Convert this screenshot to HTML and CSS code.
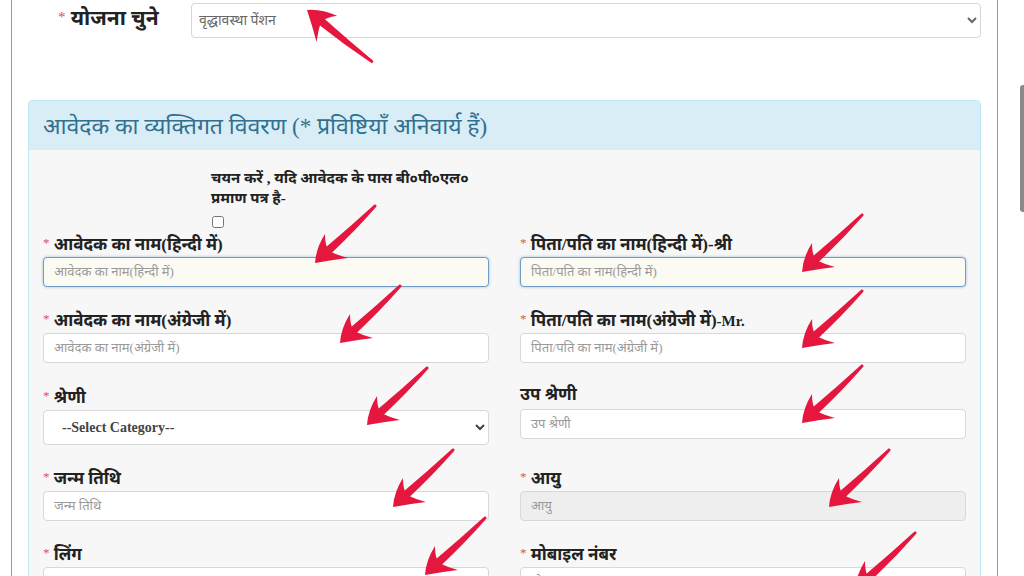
FILE: index.html
```html
<!DOCTYPE html>
<html lang="hi">
<head>
<meta charset="utf-8">
<title>आवेदन पत्र</title>
<link rel="stylesheet" href="styles.css">
</head>
<body>
<div class="screen">
  <div class="page">
    <div class="scheme-row">
      <label class="scheme-label"><span class="req">*</span> योजना चुने</label>
      <select class="scheme-select"><option>वृद्धावस्था पेंशन</option></select>
    </div>
    <div class="panel">
      <div class="panel-heading">आवेदक का व्यक्तिगत विवरण (* प्रविष्टियाँ अनिवार्य हैं)</div>
      <div class="panel-body">
        <div class="bpl">
          <p>चयन करें , यदि आवेदक के पास बी०पी०एल० प्रमाण पत्र है-</p>
          <input type="checkbox" class="bpl-check">
        </div>
        <div class="form-grid">
          <div class="field">
            <label><span class="req">*</span> आवेदक का नाम(हिन्दी में)</label>
            <input class="ctl focus" type="text" placeholder="आवेदक का नाम(हिन्दी में)">
          </div>
          <div class="field">
            <label><span class="req">*</span> पिता/पति का नाम(हिन्दी में)-श्री</label>
            <input class="ctl focus" type="text" placeholder="पिता/पति का नाम(हिन्दी में)">
          </div>
          <div class="field">
            <label><span class="req">*</span> आवेदक का नाम(अंग्रेजी में)</label>
            <input class="ctl" type="text" placeholder="आवेदक का नाम(अंग्रेजी में)">
          </div>
          <div class="field">
            <label><span class="req">*</span> पिता/पति का नाम(अंग्रेजी में)<span class="en">-Mr.</span></label>
            <input class="ctl" type="text" placeholder="पिता/पति का नाम(अंग्रेजी में)">
          </div>
          <div class="field field-shift">
            <label><span class="req">*</span> श्रेणी</label>
            <select class="ctl sel"><option>--Select Category--</option></select>
          </div>
          <div class="field">
            <label>उप श्रेणी</label>
            <input class="ctl" type="text" placeholder="उप श्रेणी">
          </div>
          <div class="field">
            <label><span class="req">*</span> जन्म तिथि</label>
            <input class="ctl" type="text" placeholder="जन्म तिथि">
          </div>
          <div class="field">
            <label><span class="req">*</span> आयु</label>
            <input class="ctl readonly" type="text" placeholder="आयु" readonly>
          </div>
          <div class="field">
            <label><span class="req">*</span> लिंग</label>
            <select class="ctl sel"><option>--Select Gender--</option></select>
          </div>
          <div class="field">
            <label><span class="req">*</span> मोबाइल नंबर</label>
            <input class="ctl" type="text" placeholder="मोबाइल नंबर">
          </div>
        </div>
      </div>
    </div>
  </div>
  <div class="scrollbar"><div class="thumb"></div></div>

  <svg class="arrows" width="1024" height="576" viewBox="0 0 1024 576" aria-hidden="true">
    <defs>
      <g id="arw">
        <path d="M67.5 0.5 Q44 22 18 44 L23.5 50 Q48 27 69.5 2.5 Q70 0.2 67.5 0.5 Z"/>
        <path d="M8 59 Q9 44 18 30 Q18 42 22 47 Q30 51 41 54 Q24 56 8 59 Z"/>
      </g>
    </defs>
    <g fill="#e5173f">
      <use href="#arw" transform="translate(307 10) rotate(82) translate(-8 -59)"/>
      <use href="#arw" transform="translate(307 204)"/>
      <use href="#arw" transform="translate(794 213)"/>
      <use href="#arw" transform="translate(332 284)"/>
      <use href="#arw" transform="translate(794 289)"/>
      <use href="#arw" transform="translate(359 366)"/>
      <use href="#arw" transform="translate(794 364)"/>
      <use href="#arw" transform="translate(385 448)"/>
      <use href="#arw" transform="translate(821 448)"/>
      <use href="#arw" transform="translate(417 516)"/>
      <use href="#arw" transform="translate(847 531)"/>
    </g>
  </svg>
</div>
</body>
</html>
```
FILE: styles.css
```css
html, body {
  margin: 0;
  padding: 0;
  background: #fff;
}
body {
  font-family: "Liberation Serif", "Noto Sans", serif;
  color: #222;
}
.screen {
  position: relative;
  width: 1024px;
  height: 576px;
  overflow: hidden;
  display: flex;
}
.page {
  margin-left: 11px;
  width: 985px;
  border-left: 1px solid #9a9a9a;
  border-right: 1px solid #9a9a9a;
  flex: none;
}
.scheme-row {
  display: flex;
  align-items: flex-start;
  padding: 3px 16px 0 46px;
}
.scheme-label {
  width: 133px;
  flex: none;
  font-size: 21px;
  font-weight: bold;
  line-height: 28px;
  color: #222;
}
.req {
  color: #d9534f;
  font-size: 13px;
  font-weight: normal;
  vertical-align: 3px;
}
.scheme-label .req {
  font-size: 15px;
}
.scheme-select {
  flex: 1;
  height: 35px;
  border: 1px solid #d6d6d6;
  border-radius: 4px;
  background: #fff;
  color: #666;
  font-family: inherit;
  font-size: 14px;
  padding: 0 3px;
}
.panel {
  margin: 62px 16px 0 16px;
  border: 1px solid #bce8f1;
  border-radius: 4px 4px 0 0;
  background: #f7f7f7;
}
.panel-heading {
  height: 49px;
  line-height: 52px;
  background: #d9edf7;
  color: #31708f;
  font-size: 23px;
  padding: 0 14px;
  border-radius: 3px 3px 0 0;
  white-space: nowrap;
}
.panel-body {
  padding: 0 14px 14px 14px;
}
.bpl {
  margin-left: 168px;
  width: 280px;
  padding-top: 18px;
}
.bpl p {
  margin: 0;
  font-size: 15px;
  font-weight: bold;
  line-height: 20px;
  color: #222;
}
.bpl-check {
  display: block;
  width: 12px;
  height: 12px;
  margin: 8px 0 0 1px;
}
.form-grid {
  margin-top: 5px;
  display: grid;
  grid-template-columns: 1fr 1fr;
  column-gap: 31px;
  row-gap: 22px;
}
.field label {
  display: block;
  height: 20px;
  white-space: nowrap;
  font-size: 17px;
  font-weight: bold;
  line-height: 20px;
  margin-bottom: 4px;
  color: #222;
}
.field .en {
  font-size: 15px;
}
.field-shift {
  padding-top: 1px;
}
.ctl {
  display: block;
  width: 100%;
  box-sizing: border-box;
  height: 30px;
  border: 1px solid #d8d8d8;
  border-radius: 4px;
  background: #fff;
  padding: 0 10px;
  font-family: inherit;
  font-size: 13px;
  color: #555;
  outline: none;
}
.ctl::placeholder {
  color: #9a9a9a;
}
.ctl.focus {
  border-color: #6f9cc6;
  background: #fbfbf3;
  box-shadow: 0 0 3px rgba(102, 150, 200, 0.6);
}
.ctl.readonly {
  background: #eee;
}
.ctl.sel {
  height: 35px;
  padding: 0 14px;
  font-size: 14px;
  font-weight: bold;
  color: #444;
}
.scrollbar {
  flex: 1;
  display: flex;
  justify-content: flex-end;
}
.thumb {
  margin-top: 85px;
  width: 4px;
  height: 127px;
  background: #8a8a8a;
  border-radius: 3px 0 0 3px;
}
.arrows {
  position: absolute;
  left: 0;
  top: 0;
  pointer-events: none;
}
```
